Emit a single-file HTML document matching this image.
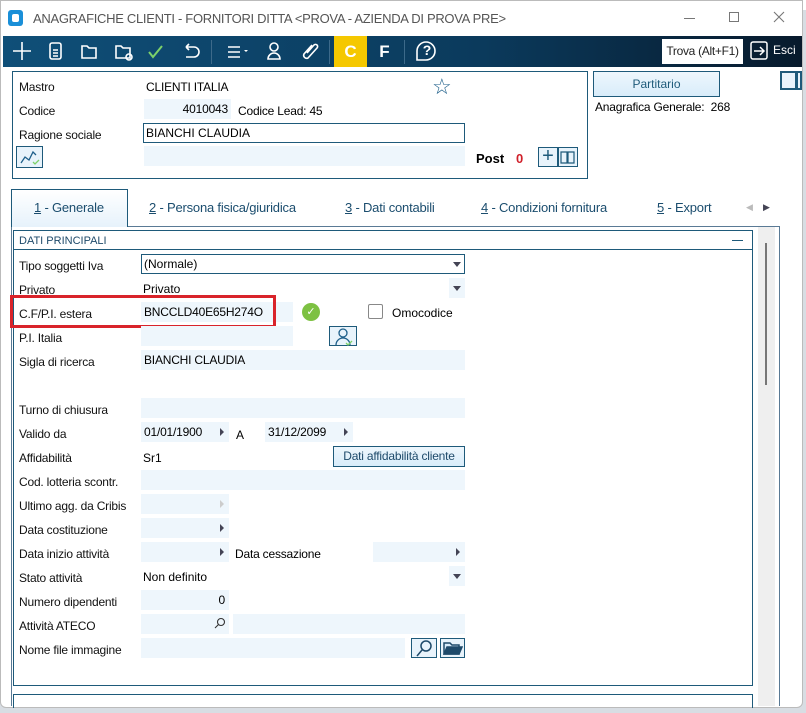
<!DOCTYPE html>
<html><head><meta charset="utf-8">
<style>
*{margin:0;padding:0;box-sizing:border-box}
body{width:806px;height:713px;overflow:hidden;background:#d8dde3;font-family:"Liberation Sans",sans-serif;font-size:12px;color:#000;position:relative}
.a{position:absolute}
.win{left:0;top:0;width:803px;height:708px;background:#fff;border:1px solid #bbb;border-radius:0 0 6px 6px}
.lab{position:absolute;left:19px;font-size:12px;color:#111;letter-spacing:-0.2px}
.in{position:absolute;background:#eef6fc;height:20px;font-size:12px;line-height:20px;padding-left:3px;letter-spacing:-0.2px}
.tri{position:absolute;width:0;height:0;border-left:4px solid #445;border-top:4px solid transparent;border-bottom:4px solid transparent}
.dd{position:absolute;width:0;height:0;border-top:5px solid #445;border-left:4px solid transparent;border-right:4px solid transparent}
.tab{position:absolute;top:200px;font-size:13px;color:#1b4d6e;letter-spacing:-0.2px}
.tab u{text-decoration:underline}
svg{position:absolute}
</style></head><body>
<div class="a" style="left:782px;top:0;width:24px;height:10px;background:#fff;border-left:1px solid #888"></div>
<div class="a win"></div>
<!-- title -->
<div class="a" style="left:8px;top:10px;width:15px;height:16px;background:#1a8fd8;border-radius:3px"></div>
<div class="a" style="left:12px;top:14px;width:7px;height:8px;background:#fff;border-radius:2px"></div>
<div class="a" style="left:33px;top:11px;font-size:13px;color:#555;letter-spacing:-0.3px">ANAGRAFICHE CLIENTI - FORNITORI DITTA &lt;PROVA - AZIENDA DI PROVA PRE&gt;</div>
<div class="a" style="left:684px;top:18px;width:11px;height:1px;background:#777"></div>
<div class="a" style="left:729px;top:12px;width:10px;height:10px;border:1px solid #777"></div>
<svg style="left:773px;top:11px" width="12" height="12" stroke="#777" stroke-width="1.1"><path d="M1 1l10 10M11 1L1 11"/></svg>
<!-- toolbar -->
<div class="a" style="left:3px;top:36px;width:799px;height:31px;background:linear-gradient(90deg,#0f4f78,#0b3a5c 60%,#071a2c)"></div>
<svg style="left:0;top:36px" width="450" height="31" fill="none" stroke="#fff" stroke-width="1.6">
<path d="M22 6v18M13 15h18"/>
<rect x="50" y="7" width="11" height="16" rx="2"/><path d="M53 14h5M53 17h5M53 20h5"/>
<path d="M82 10h5l2 2h7v10H82z"/>
<path d="M116 10h5l2 2h7v10h-14z"/><circle cx="129" cy="21" r="3"/>
<path d="M149 16l4 5 9-11" stroke="#7dd16a" stroke-width="2"/>
<path d="M186 11h8a5 5 0 010 10h-8M186 11l3-3M186 11l3 3"/>
<path d="M228 11h12M228 16h12M228 21h12"/><path d="M244 14h4l-2 2z" fill="#fff" stroke="none"/>
<circle cx="274" cy="11" r="4"/><path d="M268 23a6 6 0 0112 0z"/>
<path d="M312 9l-8 9a3 3 0 004 4l9-10a2 2 0 00-3-3l-7 8"/>
<path d="M426 6a9 9 0 110 18h-9v-9a9 9 0 019-9z"/>
</svg>
<div class="a" style="left:420px;top:42px;width:14px;text-align:center;color:#fff;font-size:14px;font-weight:bold">?</div>
<div class="a" style="left:211px;top:40px;width:1px;height:24px;background:#3d6a8a"></div>
<div class="a" style="left:329px;top:40px;width:1px;height:24px;background:#3d6a8a"></div>
<div class="a" style="left:404px;top:40px;width:1px;height:24px;background:#3d6a8a"></div>
<div class="a" style="left:334px;top:36px;width:33px;height:31px;background:#f5c800;color:#fff;font-weight:bold;font-size:17px;text-align:center;line-height:31px">C</div>
<div class="a" style="left:368px;top:36px;width:33px;height:31px;color:#fff;font-weight:bold;font-size:17px;text-align:center;line-height:31px">F</div>
<div class="a" style="left:662px;top:39px;width:81px;height:25px;background:#fff;font-size:12px;line-height:25px;text-align:center;color:#222;letter-spacing:-0.3px">Trova (Alt+F1)</div>
<svg style="left:750px;top:41px" width="20" height="20" fill="none" stroke="#fff" stroke-width="1.5"><rect x="1" y="1" width="16" height="17" rx="2"/><path d="M4 10h10M10 6l4 4-4 4"/></svg>
<div class="a" style="left:773px;top:43px;color:#fff;font-size:12px">Esci</div>
<!-- top panel -->
<div class="a" style="left:12px;top:71px;width:576px;height:108px;border:1px solid #1e5a7a"></div>
<div class="lab" style="top:80px">Mastro</div>
<div class="a" style="left:146px;top:80px;letter-spacing:-0.2px">CLIENTI ITALIA</div>
<div class="a" style="left:432px;top:74px;font-size:22px;color:#1e5f8a">☆</div>
<div class="lab" style="top:104px">Codice</div>
<div class="in" style="left:144px;top:99px;width:87px;text-align:right;padding-right:3px">4010043</div>
<div class="a" style="left:238px;top:104px;letter-spacing:-0.2px">Codice Lead: 45</div>
<div class="lab" style="top:128px">Ragione sociale</div>
<div class="a" style="left:143px;top:123px;width:322px;height:20px;border:1px solid #1e5a7a;line-height:18px;padding-left:2px">BIANCHI CLAUDIA</div>
<div class="a" style="left:16px;top:146px;width:27px;height:22px;border:1px solid #1e5a7a;background:#e8f3fb"></div>
<svg style="left:18px;top:148px" width="24" height="18" fill="none" stroke="#1e5f8a" stroke-width="1.3"><path d="M3 15l4-6 4 3 4-8 3 3"/><path d="M15 14l2 2 4-4" stroke="#7dd16a"/></svg>
<div class="in" style="left:144px;top:146px;width:321px"></div>
<div class="a" style="left:476px;top:151px;font-weight:bold;font-size:13px">Post</div>
<div class="a" style="left:516px;top:151px;font-weight:bold;color:#d0202a;font-size:13px">0</div>
<div class="a" style="left:538px;top:147px;width:20px;height:20px;border:1px solid #1e5a7a;background:#e8f3fb;font-size:20px;line-height:17px;text-align:center;color:#1e5a7a">+</div>
<div class="a" style="left:558px;top:147px;width:20px;height:20px;border:1px solid #1e5a7a;background:#e8f3fb"></div>
<svg style="left:560px;top:150px" width="16" height="14" fill="none" stroke="#1e5a7a" stroke-width="1.2"><path d="M1 2h6v11H1zM8 2h6v11H8z"/></svg>
<div class="a" style="left:593px;top:71px;width:127px;height:26px;border:1px solid #1e5a7a;background:linear-gradient(#eef7fd,#d8ecfa);text-align:center;line-height:24px;color:#1e5a7a">Partitario</div>
<div class="a" style="left:595px;top:100px;letter-spacing:-0.2px">Anagrafica Generale:&nbsp; 268</div>
<div class="a" style="left:780px;top:71px;width:22px;height:19px;border:2px solid #1e5a7a;background:#e8f3fb"></div>
<div class="a" style="left:795px;top:73px;width:3px;height:15px;background:#1e5a7a"></div>
<!-- tabs -->
<div class="a" style="left:11px;top:189px;width:117px;height:38px;border:1px solid #1e5a7a;border-bottom:none;background:linear-gradient(#fff,#e6f2fb);z-index:2"></div>
<div class="tab" style="left:34px;z-index:3"><u>1</u> - Generale</div>
<div class="tab" style="left:149px"><u>2</u> - Persona fisica/giuridica</div>
<div class="tab" style="left:345px"><u>3</u> - Dati contabili</div>
<div class="tab" style="left:481px"><u>4</u> - Condizioni fornitura</div>
<div class="tab" style="left:657px"><u>5</u> - Export</div>
<div class="a" style="left:746px;top:202px;color:#bbb;font-size:9px">◀</div>
<div class="a" style="left:763px;top:202px;color:#445;font-size:9px">▶</div>
<div class="a" style="left:11px;top:226px;width:769px;height:480px;border:1px solid #5a7a95;border-bottom:none"></div>
<div class="a" style="left:758px;top:227px;width:17px;height:479px;background:#efefef"></div>
<div class="a" style="left:765px;top:243px;width:2px;height:142px;background:#777"></div>
<div class="a" style="left:13px;top:230px;width:740px;height:456px;border:1px solid #1e5a7a"></div>
<div class="a" style="left:13px;top:249px;width:740px;height:1px;background:#1e5a7a"></div>
<div class="a" style="left:19px;top:235px;font-size:11px;color:#1e4a6a">DATI PRINCIPALI</div>
<div class="a" style="left:732px;top:240px;width:11px;height:1px;background:#1e5a7a"></div>
<div class="a" style="left:13px;top:694px;width:740px;height:14px;border:1px solid #1e5a7a;border-bottom:none"></div>
<!-- fields -->
<div class="lab" style="top:259px">Tipo soggetti Iva</div>
<div class="a" style="left:141px;top:254px;width:324px;height:20px;border:1px solid #1e5a7a;line-height:18px;padding-left:2px">(Normale)</div>
<div class="dd" style="left:453px;top:262px"></div>
<div class="lab" style="top:283px">Privato</div>
<div class="a" style="left:143px;top:282px">Privato</div>
<div class="in" style="left:449px;top:278px;width:16px"></div><div class="dd" style="left:453px;top:286px"></div>
<div class="lab" style="top:307px">C.F/P.I. estera</div>
<div class="in" style="left:141px;top:302px;width:152px">BNCCLD40E65H274O</div>
<div class="a" style="left:10px;top:295px;width:266px;height:33px;border:3px solid #d9232a"></div>
<div class="a" style="left:302px;top:303px;width:18px;height:18px;border-radius:50%;background:#7dc142;color:#fff;font-size:11px;text-align:center;line-height:18px">✓</div>
<div class="a" style="left:368px;top:304px;width:15px;height:15px;border:1px solid #888;border-radius:2px"></div>
<div class="a" style="left:392px;top:306px">Omocodice</div>
<div class="lab" style="top:331px">P.I. Italia</div>
<div class="in" style="left:141px;top:326px;width:152px"></div>
<div class="a" style="left:329px;top:326px;width:28px;height:20px;border:1px solid #1e5a7a;background:#e8f3fb"></div>
<svg style="left:333px;top:327px" width="22" height="19" fill="none" stroke="#1e5f8a" stroke-width="1.3"><circle cx="10" cy="6" r="4"/><path d="M3 18a7 7 0 0114 0"/><path d="M13 16l2 2 4-4" stroke="#7dd16a"/></svg>
<div class="lab" style="top:355px">Sigla di ricerca</div>
<div class="in" style="left:141px;top:350px;width:324px">BIANCHI CLAUDIA</div>
<div class="lab" style="top:403px">Turno di chiusura</div>
<div class="in" style="left:141px;top:398px;width:324px"></div>
<div class="lab" style="top:427px">Valido da</div>
<div class="in" style="left:141px;top:422px;width:88px">01/01/1900</div><div class="tri" style="left:220px;top:428px"></div>
<div class="a" style="left:236px;top:428px">A</div>
<div class="in" style="left:265px;top:422px;width:88px">31/12/2099</div><div class="tri" style="left:344px;top:428px"></div>
<div class="lab" style="top:451px">Affidabilità</div>
<div class="a" style="left:143px;top:451px">Sr1</div>
<div class="a" style="left:333px;top:446px;width:132px;height:21px;border:1px solid #1e5a7a;background:linear-gradient(#eef7fd,#d8ecfa);text-align:center;line-height:19px;color:#1e4a6a;letter-spacing:-0.2px">Dati affidabilità cliente</div>
<div class="lab" style="top:475px">Cod. lotteria scontr.</div>
<div class="in" style="left:141px;top:470px;width:324px"></div>
<div class="lab" style="top:499px">Ultimo agg. da Cribis</div>
<div class="in" style="left:141px;top:494px;width:88px"></div><div class="tri" style="left:220px;top:500px;border-left-color:#ccc"></div>
<div class="lab" style="top:523px">Data costituzione</div>
<div class="in" style="left:141px;top:518px;width:88px"></div><div class="tri" style="left:220px;top:524px"></div>
<div class="lab" style="top:547px">Data inizio attività</div>
<div class="in" style="left:141px;top:542px;width:88px"></div><div class="tri" style="left:220px;top:548px"></div>
<div class="a" style="left:235px;top:547px;letter-spacing:-0.2px">Data cessazione</div>
<div class="in" style="left:373px;top:542px;width:92px"></div><div class="tri" style="left:456px;top:548px"></div>
<div class="lab" style="top:571px">Stato attività</div>
<div class="a" style="left:143px;top:570px">Non definito</div>
<div class="in" style="left:449px;top:566px;width:16px"></div><div class="dd" style="left:453px;top:574px"></div>
<div class="lab" style="top:595px">Numero dipendenti</div>
<div class="in" style="left:141px;top:590px;width:88px;text-align:right;padding-right:4px">0</div>
<div class="lab" style="top:619px">Attività ATECO</div>
<div class="in" style="left:141px;top:614px;width:88px"></div>
<svg style="left:214px;top:617px" width="12" height="12" fill="none" stroke="#333" stroke-width="1.1"><circle cx="7" cy="5" r="3.5"/><path d="M4.5 7.5L1 11"/></svg>
<div class="in" style="left:233px;top:614px;width:232px"></div>
<div class="lab" style="top:643px">Nome file immagine</div>
<div class="in" style="left:141px;top:638px;width:264px"></div>
<div class="a" style="left:411px;top:638px;width:26px;height:20px;border:1px solid #1e5a7a;background:#e8f3fb"></div>
<svg style="left:414px;top:639px" width="20" height="18" fill="none" stroke="#1e4a6a" stroke-width="1.5"><circle cx="12" cy="7" r="5"/><path d="M8 11l-5 6"/></svg>
<div class="a" style="left:440px;top:638px;width:25px;height:20px;border:1px solid #1e5a7a;background:#e8f3fb"></div>
<svg style="left:443px;top:641px" width="20" height="15" fill="none" stroke="#1e4a6a" stroke-width="1.5"><path d="M1 2h6l2 2h7v9H1z" fill="#d8ecfa"/><path d="M1 13l3-7h15l-3 7z" fill="#1e4a6a"/></svg>
</body></html>
